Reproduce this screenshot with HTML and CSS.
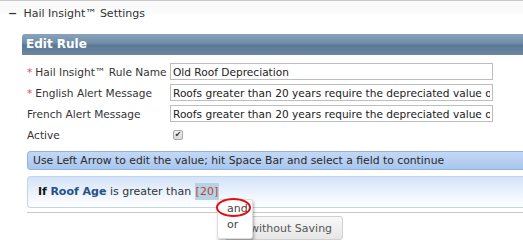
FILE: index.html
```html
<!DOCTYPE html>
<html>
<head>
    <meta charset="utf-8"/>
    <title>Edit Rule</title>
    <link rel="stylesheet" href="styles.css">
</head>
<body>
    <div class="page">
        <div class="settings-head"><span class="toggle">&minus;</span> Hail Insight&trade; Settings</div>
        <div class="panel">
            <div class="panel-head">Edit Rule</div>
            <div class="panel-body">
                <div class="form">
                    <label class="req">Hail Insight&trade; Rule Name</label>
                    <input type="text" value="Old Roof Depreciation"/>
                    <label class="req">English Alert Message</label>
                    <input type="text" value="Roofs greater than 20 years require the depreciated value of the roof"/>
                    <label>French Alert Message</label>
                    <input type="text" value="Roofs greater than 20 years require the depreciated value of the roof"/>
                    <label>Active</label>
                    <div class="check"><span class="box">&#10004;</span></div>
                </div>
                <div class="hint">Use Left Arrow to edit the value; hit Space Bar and select a field to continue</div>
                <div class="rule">
                    <b>If</b> <span class="field">Roof Age</span> is greater than <span class="val">[20]</span>
                    <ul class="menu">
                        <li>and</li>
                        <li>or</li>
                    </ul>
                    <span class="circle"></span>
                </div>
                <div class="actions">
                    <button>without Saving</button>
                </div>
            </div>
        </div>
    </div>
</body>
</html>
```

FILE: styles.css
```css
html, body {
    margin: 0;
    overflow: hidden;
}
body {
    background: #fff;
    font-family: "DejaVu Sans", Verdana, sans-serif;
    font-size: 10px;
    color: #333;
}
.page {
    width: 600px;
    border-top: 1px solid #c8c8c8;
}
.settings-head {
    height: 25px;
    line-height: 25px;
    padding-left: 8px;
    font-size: 11px;
    color: #333;
    background: linear-gradient(#fafafa, #fafafa 12px, #fff 13px);
}
.toggle {
    display: inline-block;
    width: 12px;
    font-weight: bold;
}
.panel {
    margin: 8px 0 0 22px;
}
.panel-head {
    height: 21px;
    line-height: 21px;
    padding-left: 4px;
    border-radius: 3px 0 0 0;
    background: linear-gradient(#8aa3bb, #7290aa 40%, #5b7995 55%, #6b87a2);
    color: #fff;
    font-weight: bold;
    font-size: 12px;
}
.panel-body {
    padding: 8px 0 0 5px;
}
.form {
    display: grid;
    grid-template-columns: 143px 323px;
    row-gap: 4px;
    align-items: center;
}
.form label {
    white-space: nowrap;
    font-size: 10.6px;
}
.form label.req::before {
    content: "*";
    color: #e05050;
    margin-right: 3px;
}
.form input[type="text"] {
    box-sizing: border-box;
    width: 323px;
    height: 17px;
    margin: 0;
    padding: 0 2px;
    border: 1px solid #bdbdbd;
    font: inherit;
    font-size: 10.6px;
    color: #222;
}
.check {
    height: 18px;
    display: flex;
    align-items: center;
}
.box {
    box-sizing: border-box;
    width: 10px;
    height: 10px;
    margin-left: 3px;
    border: 1px solid #a8a8a8;
    border-radius: 2px;
    background: linear-gradient(#f4f4f4, #d8d8d8);
    font-size: 8px;
    line-height: 8px;
    text-align: center;
    color: #333;
}
.hint {
    margin-top: 7px;
    height: 17px;
    line-height: 17px;
    padding-left: 5px;
    border: 1px solid #93b3df;
    border-right: none;
    border-radius: 4px 0 0 4px;
    background: linear-gradient(#c3d8f5, #a9c6ee);
    white-space: nowrap;
    font-size: 10.8px;
    color: #2a2a2a;
}
.rule {
    position: relative;
    margin-top: 6px;
    height: 30px;
    line-height: 30px;
    padding-left: 10px;
    border: 1px solid #c2d5ee;
    border-right: none;
    border-radius: 4px 0 0 4px;
    background: linear-gradient(#d3e3f8, #f4f8fe 70%, #fff);
    font-size: 11px;
    color: #333;
}
.rule b {
    color: #111;
}
.field {
    font-weight: bold;
    color: #24508e;
}
.val {
    padding: 2px 1px;
    background: #b4d3e3;
    color: #c43c3c;
}
.menu {
    position: absolute;
    left: 189px;
    top: 22px;
    z-index: 2;
    margin: 0;
    padding: 1px 0 5px;
    width: 34px;
    list-style: none;
    background: #fff;
    border: 1px solid #ddd;
    border-radius: 3px;
    box-shadow: 1px 2px 3px rgba(0, 0, 0, 0.3);
    line-height: 16px;
    font-size: 11px;
    color: #444;
}
.menu li {
    padding-left: 9px;
}
.circle {
    position: absolute;
    left: 188px;
    top: 21px;
    z-index: 3;
    width: 31px;
    height: 15px;
    border: 2.5px solid #e01010;
    border-radius: 50%;
}
.actions {
    margin-top: 4px;
    border-top: 1px solid #c8c8c8;
    padding: 3px 0 0 197px;
}
.actions button {
    height: 24px;
    padding: 0 10px 0 25px;
    border: 1px solid #d0d0d0;
    border-radius: 3px;
    background: linear-gradient(#f8f8f8, #e6e6e6);
    font-family: inherit;
    font-size: 11px;
    color: #555;
}
```
